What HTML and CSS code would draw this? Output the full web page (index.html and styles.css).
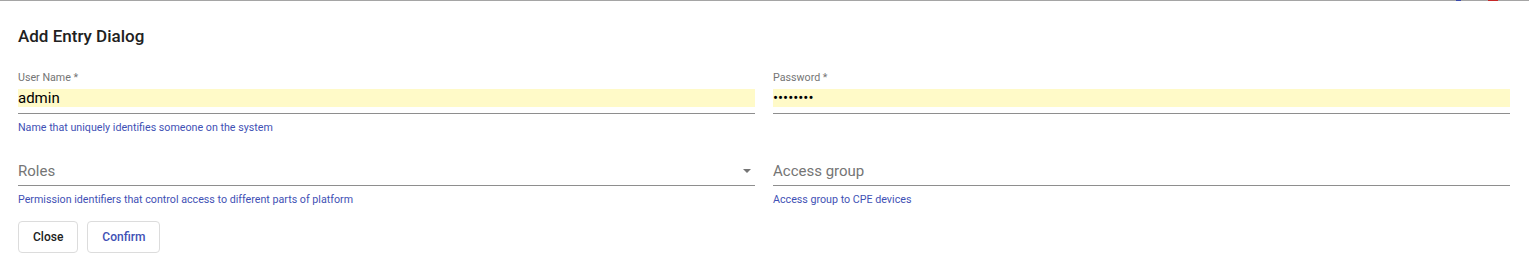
FILE: index.html
```html
<!DOCTYPE html>
<html lang="en">
<head>
    <meta charset="UTF-8">
    <meta name="viewport" content="width=device-width, initial-scale=1.0">
    <title>Add Entry Dialog</title>
    <link rel="stylesheet" href="styles.css">
</head>
<body>
    <div class="backdrop-strip"></div>
    <div class="dialog">
        <h2 class="dialog-title">Add Entry Dialog</h2>
        <div class="form-grid">
            <div class="field">
                <label class="field-label" for="userName">User Name *</label>
                <div class="field-box">
                    <input class="field-input autofilled" id="userName" type="text" value="admin">
                </div>
                <div class="field-hint">Name that uniquely identifies someone on the system</div>
            </div>
            <div class="field">
                <label class="field-label" for="password">Password *</label>
                <div class="field-box">
                    <input class="field-input autofilled" id="password" type="password" value="admin123">
                </div>
            </div>
            <div class="field">
                <div class="field-box select-box">
                    <span class="placeholder">Roles</span>
                    <span class="select-arrow"></span>
                </div>
                <div class="field-hint">Permission identifiers that control access to different parts of platform</div>
            </div>
            <div class="field">
                <div class="field-box">
                    <input class="field-input plain" type="text" placeholder="Access group">
                </div>
                <div class="field-hint">Access group to CPE devices</div>
            </div>
        </div>
        <div class="actions">
            <button class="btn">Close</button>
            <button class="btn primary">Confirm</button>
        </div>
    </div>
</body>
</html>
```

FILE: styles.css
```css
*,
*:before,
*:after {
    padding: 0;
    margin: 0;
    box-sizing: border-box;
}

body {
    font-family: Roboto, "Noto Sans", sans-serif;
    background-color: #ffffff;
    color: #212121;
}

.backdrop-strip {
    height: 1px;
    background: linear-gradient(to right,
        #a5a5a5 0, #a5a5a5 1456px,
        #3949ab 1456px, #3949ab 1461px,
        #a5a5a5 1461px, #a5a5a5 1488px,
        #c62828 1488px, #c62828 1498px,
        #a5a5a5 1498px, #a5a5a5 1529px,
        #ffffff 1529px);
}

.dialog {
    padding: 25px 21px 12px 18px;
}

.dialog-title {
    font-size: 17px;
    line-height: 20px;
    font-weight: 500;
    color: #212121;
}

.form-grid {
    display: grid;
    grid-template-columns: 1fr 1fr;
    column-gap: 18px;
    row-gap: 28px;
    margin-top: 24px;
}

.field {
    display: flex;
    flex-direction: column;
}

.field-label {
    font-size: 10.7px;
    line-height: 14px;
    color: #757575;
    padding-top: 1px;
    margin-bottom: 4px;
}

.field-box {
    display: flex;
    align-items: center;
    padding-bottom: 5px;
    border-bottom: 1px solid #8e8e8e;
}

.field-input {
    width: 100%;
    border: none;
    outline: none;
    font-family: inherit;
    font-size: 15px;
    line-height: 18px;
    height: 18px;
    color: #000000;
    background: transparent;
}

.field-input.autofilled {
    background-color: #fffac8;
    margin-bottom: 1px;
}

.field-input::placeholder {
    color: #757575;
}

.select-box {
    justify-content: space-between;
}

.placeholder {
    font-size: 15px;
    line-height: 18px;
    color: #757575;
}

.select-arrow {
    width: 0;
    height: 0;
    border-left: 4px solid transparent;
    border-right: 4px solid transparent;
    border-top: 4px solid #757575;
    margin-right: 4px;
}

.field-hint {
    margin-top: 7px;
    font-size: 10.7px;
    line-height: 13px;
    color: #3f51b5;
}

.actions {
    display: flex;
    gap: 9px;
    margin-top: 15px;
}

.btn {
    height: 32px;
    padding: 0 14px;
    font-family: inherit;
    font-size: 12px;
    font-weight: 500;
    color: #212121;
    background: #ffffff;
    border: 1px solid #dcdcdc;
    border-radius: 4px;
}

.btn.primary {
    color: #3f51b5;
}
```
